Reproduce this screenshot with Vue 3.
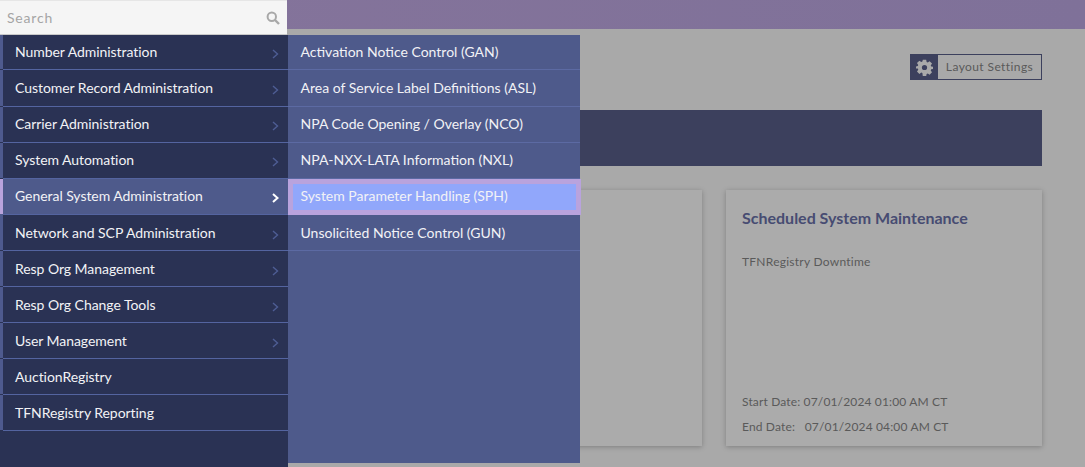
<script setup>
const menu = [
  { label: 'Number Administration', arrow: true },
  { label: 'Customer Record Administration', arrow: true },
  { label: 'Carrier Administration', arrow: true },
  { label: 'System Automation', arrow: true },
  { label: 'General System Administration', arrow: true, active: true },
  { label: 'Network and SCP Administration', arrow: true },
  { label: 'Resp Org Management', arrow: true },
  { label: 'Resp Org Change Tools', arrow: true },
  { label: 'User Management', arrow: true },
  { label: 'AuctionRegistry', arrow: false },
  { label: 'TFNRegistry Reporting', arrow: false },
]
const sub = [
  { label: 'Activation Notice Control (GAN)' },
  { label: 'Area of Service Label Definitions (ASL)' },
  { label: 'NPA Code Opening / Overlay (NCO)' },
  { label: 'NPA-NXX-LATA Information (NXL)' },
  { label: 'System Parameter Handling (SPH)', active: true },
  { label: 'Unsolicited Notice Control (GUN)' },
]
</script>

<template>
  <div class="page">
    <header class="topbar"></header>
    <main class="content">
      <div class="tools">
        <button class="layout-btn">
          <span class="gear">
            <svg width="17" height="17" viewBox="0 0 24 24"><path fill="#a9a9a9" fill-rule="evenodd" d="M9.6 1h4.8l.6 3.1 1.6.7 2.6-1.8 3.400 3.400-1.800 2.600.7 1.600 3.100.6v2.800l-3.100.6-.7 1.600 1.800 2.600-3.400 3.400-2.600-1.800-1.600.7-.6 3.100H9.600L9 19.900l-1.600-.7-2.600 1.800-3.400-3.400 1.800-2.600-.7-1.600L-.6 13.400v-2.800L2.500 10l.7-1.600L1.400 5.800 4.800 2.400l2.600 1.800 1.600-.7zM12 8.300a3.700 3.700 0 1 0 0 7.400 3.700 3.700 0 0 0 0-7.400z"/></svg>
          </span>
          <span class="layout-label">Layout Settings</span>
        </button>
      </div>
      <div class="banner"></div>
      <div class="cards">
        <section class="card"></section>
        <section class="card">
          <h3>Scheduled System Maintenance</h3>
          <p class="desc">TFNRegistry Downtime</p>
          <div class="dates">
            <p>Start Date: 07/01/2024 01:00 AM CT</p>
            <p>End Date: &nbsp;&nbsp;07/01/2024 04:00 AM CT</p>
          </div>
        </section>
      </div>
    </main>

    <nav class="overlay">
      <div class="main-col">
        <div class="search">
          <span>Search</span>
          <svg width="14" height="14" viewBox="0 0 14 14"><circle cx="5.8" cy="5.8" r="4.2" fill="none" stroke="#a8a8a8" stroke-width="2"/><path d="M9 9l4 4" stroke="#a8a8a8" stroke-width="2.4"/></svg>
        </div>
        <ul class="menu">
          <li v-for="m in menu" :key="m.label" :class="{ active: m.active }">
            <span>{{ m.label }}</span>
            <svg v-if="m.arrow" class="chev" width="7" height="10" viewBox="0 0 7 10"><path d="M1 1l4.5 4L1 9" fill="none"/></svg>
          </li>
        </ul>
      </div>
      <ul class="submenu">
        <li v-for="s in sub" :key="s.label" :class="{ active: s.active }">{{ s.label }}</li>
      </ul>
    </nav>
  </div>
</template>

<style>
html, body { margin: 0; }
</style>

<style scoped>
.page {
  position: relative;
  width: 1085px;
  height: 467px;
  overflow: hidden;
  background: #a9a9a9;
  font-family: Lato, "Liberation Sans", sans-serif;
}
.topbar {
  height: 29px;
  background: linear-gradient(90deg, #85749b, #7f7199);
}
.content {
  padding: 25px 43px 0 0;
  display: flex;
  flex-direction: column;
  align-items: flex-end;
}
.tools { height: 56px; }
.layout-btn {
  display: flex;
  align-items: stretch;
  height: 26px;
  width: 132px;
  padding: 0;
  border: 1px solid #3c405d;
  background: transparent;
  font: inherit;
}
.gear {
  width: 27px;
  box-sizing: border-box;
  padding-right: 1px;
  background: #3c405d;
  display: flex;
  align-items: center;
  justify-content: center;
}
.layout-label {
  flex: 1;
  font-size: 12px;
  line-height: 24px;
  color: #5a5a5a;
  text-align: center;
  letter-spacing: .4px;
}
.banner {
  width: 754px;
  height: 56px;
  background: #3c405d;
}
.cards {
  display: flex;
  gap: 24px;
  margin-top: 24px;
}
.card {
  width: 316px;
  height: 256px;
  box-sizing: border-box;
  background: #ababab;
  box-shadow: 0 1px 5px rgba(0,0,0,.25);
  padding: 18px 16px 0;
  display: flex;
  flex-direction: column;
}
.card h3 {
  margin: 0;
  font-size: 16px;
  line-height: 20px;
  font-weight: 700;
  color: #474c72;
}
.desc {
  margin: 24px 0 0;
  font-size: 12px;
  line-height: 20px;
  color: #5a5a5a;
  letter-spacing: .25px;
}
.dates {
  margin-top: auto;
  padding-bottom: 7px;
}
.dates p {
  margin: 0;
  font-size: 12px;
  line-height: 25px;
  color: #5a5a5a;
  letter-spacing: .15px;
}
.overlay {
  position: absolute;
  left: 0;
  top: 0;
  height: 467px;
  display: flex;
  align-items: flex-start;
}
.main-col {
  width: 288px;
  height: 467px;
  background: linear-gradient(#2a3254, #2a3254) 0 35px no-repeat;
}
.search {
  position: relative;
  z-index: 1;
  width: 287px;
  height: 35px;
  box-sizing: border-box;
  background: #f5f5f5;
  border-top: 1px solid #e6e6e6;
  border-bottom: 1px solid #c9c9c9;
  display: flex;
  align-items: center;
  justify-content: space-between;
  padding: 0 7px 0 7px;
  font-size: 14px;
  color: #a5a5a5;
  letter-spacing: .8px;
}
ul { list-style: none; margin: 0; padding: 0; }
.menu { margin-top: -.65px; }
.menu li {
  height: 36.1px;
  box-sizing: border-box;
  background:
    linear-gradient(#5464a0, #5464a0) 3px 100% / 100% 1px no-repeat,
    linear-gradient(#4e5a8e, #4e5a8e) 0 0 / 3px calc(100% - 1px) no-repeat;
  padding: 0 9px 1.7px 15px;
  display: flex;
  align-items: center;
  justify-content: space-between;
  color: #f2f2f6;
  font-size: 14px;
  letter-spacing: -.05px;
}
.chev { stroke: #4e5d94; stroke-width: 1.4; margin-top: 5px; }
.menu li.active {
  background:
    linear-gradient(#5464a0, #5464a0) 3px 100% / 100% 1px no-repeat,
    linear-gradient(#b9a3dd, #b9a3dd) 0 0 / 3px calc(100% - 1px) no-repeat,
    #4e5a8b;
}
.menu li.active .chev { stroke: #fff; stroke-width: 2; }
.submenu {
  width: 292px;
  margin-top: 35px;
  height: 428px;
  background: #4e5a8b;
}
.submenu li {
  height: 36.1px;
  box-sizing: border-box;
  border-bottom: 1px solid #5c6aa3;
  padding: 0 0 .7px 12.5px;
  display: flex;
  align-items: center;
  color: #f2f2f6;
  font-size: 14px;
}
.submenu li:first-child { margin-top: -.65px; }
.submenu li.active {
  width: 293px;
  background: #91a7fb;
  border: 5px solid #b9a3dd;
  padding: 0 0 1.7px 7.5px;
}
</style>
